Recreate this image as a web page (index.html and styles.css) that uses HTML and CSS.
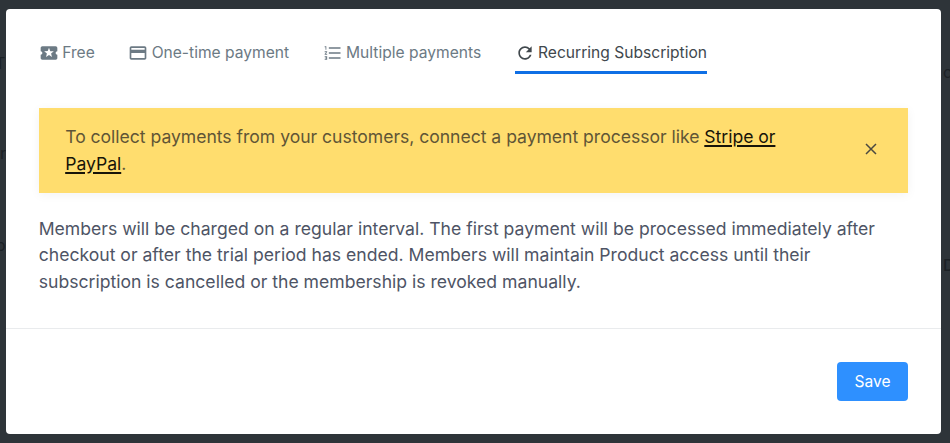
FILE: index.html
```
<!DOCTYPE html>
<html lang="en">
<head>
<meta charset="utf-8">
<title>Product pricing</title>
<link rel="stylesheet" href="styles.css">
</head>
<body>
<div class="behind" aria-hidden="true">
  <span class="peek peek-t">T</span>
  <span class="peek peek-r">r</span>
  <span class="peek peek-o">o</span>
  <span class="peek peek-c">c</span>
  <span class="peek peek-d">D</span>
</div>
<main class="modal">
  <section class="content">
    <nav class="tabs">
      <a class="tab">
        <svg class="icon" viewBox="0 0 24 24"><path d="M20 12c0-1.100.9-2 2-2V6c0-1.100-.9-2-2-2H4c-1.100 0-1.990.9-1.990 2v4c1.100 0 1.990.9 1.990 2s-.890 2-2 2v4c0 1.100.9 2 2 2h16c1.100 0 2-.9 2-2v-4c-1.100 0-2-.9-2-2zm-4.420 4.800L12 14.500l-3.580 2.300 1.080-4.120-3.290-2.690 4.240-.250L12 5.800l1.540 3.950 4.240.250-3.290 2.690 1.090 4.110z"/></svg>
        <span class="label">Free</span>
      </a>
      <a class="tab">
        <svg class="icon" viewBox="0 0 24 24"><path d="M20 4H4c-1.110 0-1.990.89-1.990 2L2 18c0 1.110.89 2 2 2h16c1.110 0 2-.89 2-2V6c0-1.110-.89-2-2-2zm0 14H4v-6h16v6zm0-10H4V6h16v2z"/></svg>
        <span class="label">One-time payment</span>
      </a>
      <a class="tab">
        <svg class="icon" viewBox="0 0 24 24"><path d="M2 17h2v.5H3v1h1v.5H2v1h3v-4H2v1zm1-9h1V4H2v1h1v3zm-1 3h1.800L2 13.100v.9h3v-1H3.200L5 10.900V10H2v1zm5-6v2h14V5H7zm0 14h14v-2H7v2zm0-6h14v-2H7v2z"/></svg>
        <span class="label">Multiple payments</span>
      </a>
      <a class="tab active">
        <svg class="icon" viewBox="0 0 24 24"><path d="M17.650 6.350C16.200 4.900 14.210 4 12 4c-4.420 0-7.990 3.580-7.990 8s3.570 8 7.990 8c3.730 0 6.840-2.550 7.730-6h-2.080c-.82 2.330-3.040 4-5.650 4-3.310 0-6-2.690-6-6s2.690-6 6-6c1.660 0 3.140.69 4.220 1.780L13 11h7V4l-2.350 2.350z"/></svg>
        <span class="label">Recurring Subscription</span>
      </a>
    </nav>
    <div class="notice">
      <p class="notice-text">To collect payments from your customers, connect a payment processor like <a class="link">Stripe or<br>PayPal</a>.</p>
      <svg class="close" viewBox="0 0 12 12"><path d="M1 1l10 10M11 1L1 11"/></svg>
    </div>
    <p class="description">Members will be charged on a regular interval. The first payment will be processed immediately after<br>checkout or after the trial period has ended. Members will maintain Product access until their<br>subscription is cancelled or the membership is revoked manually.</p>
  </section>
  <footer class="footer"><button class="save">Save</button></footer>
</main>
</body>
</html>
```
FILE: styles.css
```
* { box-sizing: border-box; }
body {
  margin: 0;
  width: 950px;
  height: 443px;
  overflow: hidden;
  background: #2e3439;
  font-family: Inter, "Liberation Sans", sans-serif;
}
p { margin: 0; }
.behind { position: absolute; inset: 0; color: #1c2125; overflow: hidden; }
.peek { position: absolute; font-size: 16px; line-height: 20px; }
.peek-t { left: -5px; top: 53px; }
.peek-r { left: 0; top: 143px; }
.peek-o { left: -4px; top: 235px; }
.peek-c { left: 943px; top: 62px; }
.peek-d { left: 943px; top: 255px; font-weight: 500; }
.modal {
  position: relative;
  margin: 8.5px 9px 0 5.500px;
  height: 425.500px;
  display: flex;
  flex-direction: column;
  background: #fff;
  border-radius: 4px;
}
.content {
  height: 320px;
  padding: 27.500px 33px 0 33.200px;
  border-bottom: 1px solid #e9ebed;
}
.tabs { display: flex; height: 38px; color: #6c7a84; }
.tab {
  display: flex;
  align-items: center;
  height: 38px;
  padding-bottom: 2px;
  font-size: 15.600px;
  line-height: 20px;
  white-space: nowrap;
  border-bottom: 3px solid transparent;
}
.tab + .tab { margin-left: 33.400px; }
.icon { width: 20px; height: 20px; margin-right: 3.500px; fill: currentColor; flex: none; }
.active { color: #41484d; border-color: #0f6fe5; }
.notice {
  display: flex;
  align-items: center;
  justify-content: space-between;
  height: 85px;
  margin-top: 34px;
  padding: 0 31px 0 26.500px;
  background: #ffdd6e;
  color: #5f5536;
  box-shadow: 0 2px 10px rgba(0, 0, 0, .05);
}
.notice-text, .description { font-size: 17.600px; line-height: 26.400px; white-space: nowrap; }
.notice-text { letter-spacing: -.03px; }
.link { color: #171409; text-decoration: underline; text-decoration-thickness: 1.500px; text-underline-offset: 2px; }
.close { width: 12px; height: 12px; margin-bottom: 3px; fill: none; stroke: #4b4940; stroke-width: 1.500; }
.description { margin-top: 23px; color: #4e5465; }
.footer { display: flex; justify-content: flex-end; padding: 33px 33px 0 0; }
.save {
  width: 71px;
  height: 39px;
  padding: 1px 0 0;
  border: 0;
  border-radius: 4px;
  background: #2e90ff;
  color: #fff;
  font: 15.600px/20px Inter, "Liberation Sans", sans-serif;
}
```
